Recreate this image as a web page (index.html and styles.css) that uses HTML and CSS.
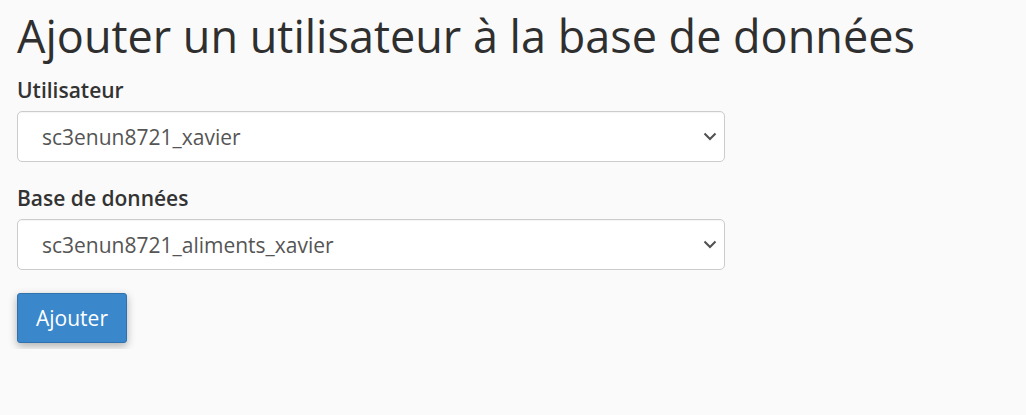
FILE: index.html
```html
<!DOCTYPE html>
<html lang="fr">
<head>
<meta charset="utf-8">
<title>Ajouter un utilisateur</title>
<link rel="stylesheet" href="styles.css">
</head>
<body>
<div class="page">
  <h1 class="title">Ajouter un utilisateur à la base de données</h1>
  <div class="field">
    <label class="label">Utilisateur</label>
    <div class="select">
      <span class="value">sc3enun8721_xavier</span>
      <svg class="chev" width="14" height="9" viewBox="0 0 14 9"><path d="M1.5 1.5 L7 7 L12.5 1.5" fill="none" stroke="#505050" stroke-width="2"/></svg>
    </div>
  </div>
  <div class="field">
    <label class="label">Base de données</label>
    <div class="select">
      <span class="value">sc3enun8721_aliments_xavier</span>
      <svg class="chev" width="14" height="9" viewBox="0 0 14 9"><path d="M1.5 1.5 L7 7 L12.5 1.5" fill="none" stroke="#505050" stroke-width="2"/></svg>
    </div>
  </div>
  <button class="btn">Ajouter</button>
</div>
</body>
</html>
```
FILE: styles.css
```css
html, body {
  margin: 0;
  padding: 0;
  background: #fafafa;
}
body {
  font-family: "Open Sans", "Liberation Sans", sans-serif;
  color: #333;
}
.page {
  padding: 6px 17px;
  display: flex;
  flex-direction: column;
  align-items: flex-start;
}
.title {
  margin: 0;
  font-weight: 400;
  font-size: 45px;
  line-height: 60px;
  color: #2f2f2f;
}
.field {
  width: 708px;
  display: flex;
  flex-direction: column;
  margin-bottom: 12px;
}
.label {
  font-weight: 600;
  font-size: 21px;
  line-height: 28px;
  margin: 10px 0 7px;
  color: #333;
}
.select {
  box-sizing: border-box;
  height: 51px;
  border: 1px solid #ccc;
  border-radius: 5px;
  background: #fff;
  box-shadow: inset 0 1px 1px rgba(0,0,0,0.04);
  display: flex;
  align-items: center;
  justify-content: space-between;
  padding: 0 7px 0 24px;
}
.value {
  font-size: 21px;
  color: #555;
}
.btn {
  margin-top: 11px;
  font-family: inherit;
  font-size: 21px;
  color: #fff;
  background: #3a87cc;
  border: 1px solid #2f72ad;
  border-radius: 3px;
  width: 110px;
  height: 50px;
  box-shadow: 0 3px 8px rgba(0,0,0,0.3);
  padding: 0;
}
```
